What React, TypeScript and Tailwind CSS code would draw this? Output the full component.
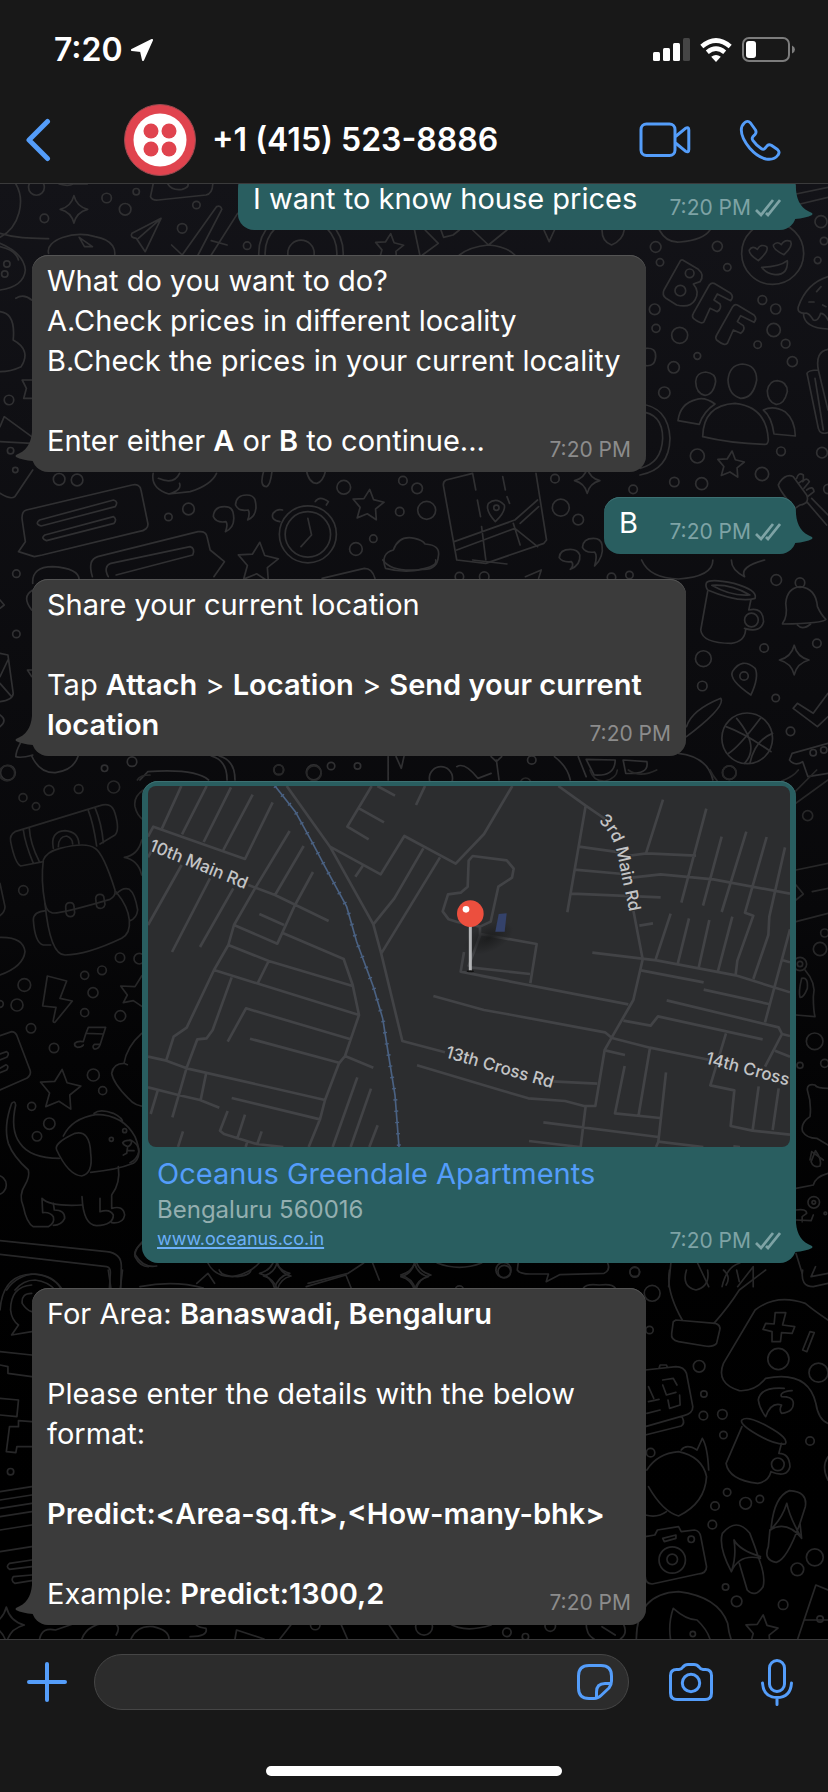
import React from "react";

type Ring = [number, number, number];

const BLUE = "#549dfa";

/* ---------- wallpaper ---------- */

interface PatchProps {
  x: number;
  y: number;
  sx: number;
  sy: number;
  rings: Ring[];
  stars?: Ring[];
  sparkles?: Ring[];
  paths: string[];
}

function starPath(cx: number, cy: number, r: number, k: number) {
  const pts: string[] = [];
  for (let i = 0; i < 10; i++) {
    const a = -Math.PI / 2 + 0.1 + (i * Math.PI) / 5;
    const q = i % 2 === 0 ? r : r * 0.5;
    pts.push(`${(cx + Math.cos(a) * q).toFixed(1)} ${(cy + Math.sin(a) * q * k).toFixed(1)}`);
  }
  return `M${pts.join("L")}Z`;
}

function sparklePath(cx: number, cy: number, r: number, k: number) {
  const s = r * k;
  const c = r * 0.2;
  const d = c * k;
  return `M${cx} ${cy - s}Q${cx + c} ${cy - d} ${cx + r} ${cy}Q${cx + c} ${cy + d} ${cx} ${cy + s}Q${cx - c} ${cy + d} ${cx - r} ${cy}Q${cx - c} ${cy - d} ${cx} ${cy - s}Z`;
}

function Patch({ x, y, sx, sy, rings, stars = [], sparkles = [], paths }: PatchProps) {
  const k = sx / sy;
  return (
    <g transform={`translate(${x} ${y}) scale(${sx} ${sy})`}>
      {rings.map(([cx, cy, r], i) => (
        <ellipse key={i} cx={cx} cy={cy} rx={r} ry={r * k} vectorEffect="non-scaling-stroke" />
      ))}
      {stars.map(([cx, cy, r], i) => (
        <path key={i} d={starPath(cx, cy, r, k)} vectorEffect="non-scaling-stroke" />
      ))}
      {sparkles.map(([cx, cy, r], i) => (
        <path key={i} d={sparklePath(cx, cy, r, k)} vectorEffect="non-scaling-stroke" />
      ))}
      {paths.map((d, i) => (
        <path key={i} d={d} vectorEffect="non-scaling-stroke" />
      ))}
    </g>
  );
}

const T = 1 / 3;
const W = 828 / 1568;

const PATCHES: PatchProps[] = [
  {
    x: 0, y: 0, sx: W, sy: T,
    rings: [[69, 562, 15], [258, 575, 6], [202, 594, 9], [237, 628, 11], [84, 655, 8], [345, 685, 9], [468, 737, 7], [372, 615, 7], [570, 760, 80], [570, 760, 68], [570, 760, 25]],
    stars: [[737, 745, 28]],
    sparkles: [[140, 628, 26]],
    paths: [
      "M30 552C48 600 38 680 0 712M0 700C30 715 60 715 92 716M92 760C85 720 140 690 180 710C215 720 222 750 215 780M150 712L175 740L160 740Z",
      "M290 552L285 590Q288 602 300 600L390 585Q402 582 403 552M318 552Q325 572 345 568Q358 562 356 552M112 552Q130 560 138 552L165 552",
      "M305 655L250 700Q245 712 258 715L275 755L305 655L262 715",
      "M410 620L345 765M420 628L375 765M410 620Q418 615 420 628M450 640L400 765M325 735L345 765M400 722L430 735",
      "M785 690L795 765M805 690L830 730L800 765M895 690L925 735L960 690M925 735Q890 740 870 765M925 735Q960 740 975 765M835 690L840 712L858 705L870 690",
      "M1030 690L1040 725L1050 690M1140 690Q1140 725 1158 735Q1180 720 1182 690",
      "M0 740Q30 750 35 780",
    ],
  },
  {
    x: 640, y: 180, sx: T, sy: T,
    rings: [[47, 201, 16], [60, 247, 11], [232, 199, 15], [262, 262, 11], [44, 388, 16], [48, 445, 12], [119, 466, 24], [367, 360, 13], [407, 387, 15], [401, 450, 20], [353, 494, 11], [437, 491, 13], [457, 545, 15], [172, 528, 10], [101, 562, 17], [73, 638, 17], [543, 125, 18], [552, 183, 11], [533, 241, 10], [172, 828, 21], [423, 814, 13], [546, 818, 16], [366, 882, 20], [185, 911, 18], [103, 906, 14], [565, 927, 14], [149, 280, 13], [121, 332, 16], [398, 220, 93]],
    stars: [[272, 855, 42]],
    paths: [
      "M468 42L564 22M468 75L564 52M58 150Q80 190 120 186Q190 180 210 150",
      "M128 240L175 268Q195 285 180 305L160 312Q180 335 165 360Q150 385 110 375L78 355Q65 345 72 330L118 248Q122 238 128 240Z",
      "M222 310L272 340Q282 350 272 362L232 342L222 360L240 372Q246 385 232 395L210 385L192 425Q185 435 160 415Q155 408 160 400L208 315Q214 307 222 310Z",
      "M292 375L342 405Q352 415 342 427L302 407L292 425L310 437Q316 450 302 460L280 450L262 490Q255 500 230 480Q225 473 230 465L278 380Q284 372 292 375Z",
      "M355 242Q325 222 328 210Q338 195 352 208Q362 190 380 200Q388 212 355 242Z",
      "M432 224Q398 208 400 195Q412 182 424 194Q434 176 452 184Q460 198 432 224Z",
      "M365 262Q420 260 442 242Q445 285 405 284Q380 282 365 262Z",
      "M564 290Q500 310 475 380Q470 400 495 400Q505 395 520 420Q535 425 542 400Q555 400 564 420M490 400Q492 445 564 447M543 320L530 335M507 366L522 366M548 375L558 380",
      "M197 576Q228 580 227 605Q220 645 195 646Q168 640 167 605Q168 578 197 576Z",
      "M307 552Q350 555 350 600Q340 655 302 655Q266 645 264 600Q268 555 307 552Z",
      "M412 602Q442 605 442 635Q432 675 408 673Q382 665 382 632Q388 602 412 602Z",
      "M225 672Q195 650 170 658Q120 670 114 722L178 733Q190 695 225 672Z",
      "M188 770Q190 675 285 670Q380 680 385 780Q384 795 372 793Q270 790 188 770Z",
      "M370 690Q400 675 435 695Q465 720 466 768L402 762Q395 710 370 690Z",
      "M0 672Q85 680 90 775Q88 870 0 885M0 695Q68 700 68 775Q65 850 0 865M18 505Q48 502 47 530Q45 560 18 557",
      "M420 905Q440 880 460 890L500 945Q510 970 480 975L465 985Q420 935 415 915ZM470 895Q475 875 490 885L490 900L478 908M488 905Q500 890 508 905L492 925M500 930Q520 915 522 935L505 948M500 965L560 1035M515 955L564 1005",
      "M501 580Q505 570 535 570M501 580L535 745Q540 765 564 758M525 595L550 750M535 570Q525 515 564 508M535 570L564 690",
    ],
  },
  {
    x: 0, y: 240, sx: W, sy: T,
    rings: [[13, 72, 6], [9, 102, 6], [17, 480, 9], [20, 632, 6], [29, 690, 5], [112, 718, 11], [146, 720, 11], [651, 742, 13], [790, 745, 10], [763, 722, 8], [319, 831, 7], [357, 807, 11], [757, 815, 8], [808, 811, 17], [674, 927, 12], [707, 896, 7], [1062, 803, 16], [1095, 839, 10], [1051, 716, 8], [1199, 748, 8], [583, 883, 54], [583, 883, 43], [940, 803, 5]],
    stars: [[697, 797, 31], [488, 970, 40]],
    sparkles: [[1112, 722, 24]],
    paths: [
      "M0 10Q45 40 48 90Q45 140 0 150M30 175Q45 160 60 180M0 215Q30 220 25 300Q60 330 40 380Q20 395 0 395M60 420L42 420L50 445L45 475L60 475M0 605L60 610M0 560L8 530L60 590M62 690L28 770Q20 780 0 760",
      "M290 700Q285 745 320 762L360 755Q400 735 410 700M300 715Q330 735 340 700M320 762Q345 750 340 730M500 690Q490 740 505 740Q512 735 515 695M580 690Q585 730 600 730Q612 725 617 690",
      "M50 810L250 735Q265 730 267 750L280 850Q282 870 262 875L80 945L65 950L35 935L48 905L42 840Q40 815 50 810Z",
      "M75 840L215 780Q225 785 218 800L78 858Q65 852 75 840ZM85 885L215 830Q222 838 216 850L88 902Q76 895 85 885Z",
      "M175 1010Q165 960 185 950L375 875Q390 872 392 890L398 930L425 965L405 1010M205 1010Q195 980 210 970L360 920Q370 925 365 945L220 1005",
      "M425 800Q405 800 404 830Q410 850 428 845Q432 855 427 875Q448 860 441 815Q438 800 425 800Z",
      "M467 765Q447 765 446 795Q452 815 470 810Q474 820 469 840Q490 825 483 780Q480 765 467 765Z",
      "M1080 928Q1060 928 1059 953Q1065 968 1082 965Q1088 975 1080 988Q1100 975 1098 945Q1094 928 1080 928ZM1124 895Q1104 895 1103 922Q1109 940 1126 936Q1132 946 1126 978Q1144 950 1140 915Q1138 895 1124 895Z",
      "M583 835L590 885L570 920M597 785Q605 765 622 785L618 795M530 845Q512 840 517 820Q525 805 535 810",
      "M730 985Q720 940 745 930Q755 885 785 895Q800 900 805 912Q835 915 830 950Q828 990 800 988Q765 1000 730 985Z",
      "M895 700L845 720Q838 725 840 740L865 960L920 970L1030 910L1035 900L1015 700M895 700L901 750M904 780L910 830M912 860L920 960M952 710L957 750M960 770L965 790M972 850L985 915M860 905L975 840L1018 780M865 930L975 865L1018 920M985 850L1020 800",
      "M938 845Q918 810 925 790Q940 770 955 795Q958 815 938 845Z",
    ],
  },
  {
    x: 0, y: 560, sx: W, sy: T,
    rings: [[31, 41, 7], [31, 222, 7], [15, 638, 14], [250, 605, 9], [198, 625, 6], [528, 629, 9], [594, 637, 14], [627, 618, 7], [677, 618, 6], [1007, 600, 8], [1470, 60, 10], [1547, 250, 8], [1447, 264, 8], [1332, 296, 15], [1330, 378, 9], [1469, 414, 7], [1497, 514, 8], [1381, 638, 13], [1158, 52, 8], [1192, 45, 7], [870, 50, 8], [917, 50, 9], [1423, 180, 13], [1515, 68, 9], [1409, 348, 8], [1415, 535, 48], [1540, 578, 6], [1560, 570, 6], [835, 655, 22]],
    sparkles: [[1504, 300, 28]],
    paths: [
      "M62 70Q60 20 100 20Q150 25 150 60M62 90Q40 110 60 150M0 120L8 135L0 145M0 280L15 285L25 400Q25 420 0 425M0 350L15 300M0 370L22 410M60 330L52 330L60 350M0 465Q15 480 0 500M60 500Q30 560 30 590Q40 595 62 585",
      "M60 588Q75 640 105 638Q140 630 148 588M265 660L280 635Q370 625 395 660M400 588Q430 600 430 660M415 588Q445 600 445 660M735 660L735 590M750 590L760 625L765 590M940 600L945 660M930 590L940 605L950 590M865 620Q880 605 905 655L930 640M1050 590Q1075 620 1080 660",
      "M1110 598L1125 645Q1165 650 1165 600ZM1180 600L1185 640Q1230 645 1225 605ZM1095 590L1110 650M1285 580Q1340 590 1350 660",
      "M1338 68Q1345 55 1390 70Q1435 90 1430 115Q1400 130 1340 90Q1335 78 1338 68ZM1348 76Q1385 72 1420 105Q1385 110 1348 76Z",
      "M1340 95L1327 210Q1330 250 1385 250Q1410 245 1412 210M1422 120L1418 150Q1445 140 1446 185Q1440 220 1410 205",
      "M1482 190Q1492 170 1488 130Q1490 85 1515 80Q1545 85 1548 140Q1555 165 1564 178Q1560 190 1482 192ZM1510 195Q1520 212 1535 192",
      "M1422 405Q1380 360 1387 335Q1405 290 1430 325Q1438 350 1422 405Z",
      "M1568 400L1540 460L1510 430L1502 445L1548 500L1568 470M1365 415Q1310 450 1300 500M1365 415Q1375 440 1300 530",
      "M1375 500Q1410 520 1460 575M1395 475Q1440 560 1410 610M1440 475Q1400 560 1380 580M1463 520Q1430 540 1420 610",
      "M1568 550L1500 580L1495 600Q1505 620 1520 605L1530 650L1568 640",
      "M725 0Q740 35 790 30Q830 20 825 0M895 0L960 12M610 55L690 25Q705 25 710 55M995 50L1025 30L1020 55M1215 0Q1230 55 1285 57Q1350 50 1350 0M1385 0Q1385 30 1410 50Q1400 20 1448 0",
    ],
  },
  {
    x: 0, y: 770, sx: T, sy: T,
    rings: [[21, 10, 23], [69, 83, 12], [108, 109, 11], [147, 61, 15], [236, 57, 13], [341, 51, 18], [70, 361, 14], [360, 563, 14], [418, 566, 16], [306, 601, 13], [254, 616, 12], [279, 668, 15], [254, 728, 12], [361, 738, 16], [73, 645, 19], [51, 705, 18], [93, 775, 14], [162, 834, 14], [280, 915, 18], [308, 962, 12], [95, 1009, 12], [148, 1061, 17], [111, 1099, 14], [0, 702, 10], [-10, 1245, 29], [334, 1108, 6], [374, 1082, 6], [836, 0, 15], [942, 10, 22]],
    stars: [[180, 962, 64]],
    paths: [
      "M45 185L300 107Q335 95 345 130Q360 180 345 195L300 222M45 185Q28 195 32 215Q45 280 62 288L130 275M70 180Q75 220 100 280M88 175Q90 220 118 275M265 122Q280 160 290 228M285 113Q305 160 310 218",
      "M160 235Q150 185 195 182Q235 185 237 222M175 230Q175 200 200 198Q218 205 218 222",
      "M130 270Q140 245 180 235Q260 215 285 235Q310 250 345 360Q348 378 330 388Q170 435 155 428Q140 425 135 400Q122 330 130 270Z",
      "M135 400Q150 555 195 555Q260 555 365 505Q392 490 388 450Q385 410 348 365M138 422Q100 425 100 450Q105 520 130 525L152 525M348 372Q370 350 388 358Q405 370 413 420Q410 445 390 452",
      "M197 410Q198 398 210 398Q222 398 222 410L224 428Q222 440 211 440Q200 440 198 428ZM287 385Q288 373 300 373Q312 373 312 385L315 403Q312 415 301 415Q290 415 289 403Z",
      "M0 502Q70 500 75 545Q70 590 0 615M0 340L15 410Q15 425 0 437",
      "M142 618L200 633L180 685L217 693L165 757Q158 758 160 750L168 712L128 708Z",
      "M250 825Q245 832 232 832Q222 828 224 820Q232 812 250 815Q255 795 265 772L317 772L300 825Q295 838 283 837Q275 830 283 823L298 823M260 790L310 792",
      "M0 797L35 785Q45 785 50 795L90 900Q95 915 80 925L0 960M0 852L20 845Q30 850 20 862L0 870M0 895L18 884Q28 888 20 900L0 908",
      "M35 1000Q10 1070 25 1120Q40 1160 85 1200Q90 1220 75 1245Q55 1275 70 1310Q80 1360 100 1370L145 1370Q165 1360 160 1340Q150 1325 128 1328L126 1285Q150 1310 245 1305M35 1000Q45 990 47 1005Q30 1080 60 1120Q90 1165 178 1165",
      "M190 1098Q215 1045 290 1033Q370 1035 405 1100Q430 1160 400 1180Q350 1200 272 1207M170 1140Q160 1120 225 1090Q270 1080 272 1150Q280 1210 245 1218Q205 1215 170 1140ZM282 1030Q300 1015 340 1030Q370 1045 368 1058",
      "M355 1190Q362 1240 335 1275L335 1315Q370 1305 374 1335Q370 1362 335 1358M246 1280Q250 1365 290 1367Q340 1365 340 1335Q330 1315 300 1325L300 1285M160 1300L163 1320Q195 1320 194 1345Q185 1365 160 1366",
      "M368 1118Q375 1108 395 1112Q395 1125 383 1130Q370 1125 368 1118ZM383 1130L380 1150L370 1155M383 1142L402 1142",
      "M0 1412L320 1445Q365 1450 364 1490L362 1560M0 1453L320 1490Q332 1492 331 1510L328 1560M20 1560Q50 1515 105 1512Q160 1515 188 1560M45 1560Q70 1530 105 1530Q145 1535 165 1560",
      "M425 790Q380 830 372 880Q340 880 335 910Q340 940 385 985Q405 1010 440 1010M372 880L382 884M425 210Q415 255 373 262Q415 270 425 315M435 610L425 618L405 650L362 648L382 675L370 698L400 692L430 712M425 1420Q400 1440 405 1460Q420 1490 445 1490M430 60Q400 80 405 110Q410 135 430 150M412 30Q420 15 450 15",
    ],
  },
  {
    x: 480, y: 770, sx: T, sy: T,
    rings: [[983, 137, 15], [1034, 489, 12], [1020, 537, 20], [960, 582, 8], [960, 582, 20], [1004, 814, 25], [960, 886, 9], [1034, 880, 12], [748, 8, 20], [137, 40, 16]],
    paths: [
      "M940 105L1044 30M940 70L1010 0M948 300L1044 280M997 365L1044 355M948 455L1044 430M948 345L970 372L948 390",
      "M975 600Q1010 640 1000 680Q1000 720 1005 740L948 735M965 625Q985 620 982 655Q970 685 960 682Q955 665 965 625Z",
      "M1044 955Q1010 955 1005 945Q980 940 982 960Q995 1000 990 1040Q960 1060 968 1085Q980 1105 1010 1105L1044 1125M995 1145L1030 1170M995 1145L990 1170",
      "M330 0Q340 35 375 33Q410 25 412 0M445 0Q480 25 530 0M690 0Q700 20 712 33M905 33Q940 20 955 0",
    ],
  },
  {
    x: 130, y: 1140, sx: 698 / 1568, sy: T,
    rings: [[1536, 187, 13], [1536, 187, 4], [839, 390, 17], [1134, 397, 11], [1562, 220, 3]],
    sparkles: [[325, 400, 34], [642, 405, 34]],
    paths: [
      "M1540 32Q1555 60 1550 78Q1535 85 1530 65ZM1568 100Q1540 110 1535 135L1496 145M1496 210Q1520 205 1520 220L1510 230L1510 245M1496 240L1530 242L1535 225",
      "M175 369Q190 410 230 410Q270 400 290 369M400 430L490 400L525 369M545 369L560 420M690 369Q740 395 790 369M872 369L870 390Q875 402 900 402L940 402L935 425L965 404L1065 400Q1080 390 1073 369M1215 369L1210 440M1275 369L1300 440M1330 440Q1340 380 1370 369M1365 440L1400 380L1400 440M1540 380L1530 410L1568 400",
      "M28 305Q10 330 12 345Q30 385 60 378M0 0Q20 10 20 35Q15 60 0 68M1496 340L1510 400M150 430L175 400L190 430",
    ],
  },
  {
    x: 0, y: 1270, sx: W, sy: T,
    rings: [[20, 605, 6], [955, 5, 12], [1202, 5, 9], [870, 60, 8], [1235, 70, 15], [1230, 180, 7], [1474, 267, 20], [1550, 308, 18], [1324, 289, 11], [1333, 372, 6], [1332, 437, 8], [1368, 433, 9], [1370, 495, 7], [1534, 513, 8], [1232, 548, 8], [1377, 667, 7], [1354, 708, 8], [1412, 700, 11], [1439, 687, 7], [1349, 764, 8], [1543, 862, 16], [1510, 898, 12], [1374, 951, 6], [1395, 994, 10], [1483, 1004, 9], [1473, 583, 12], [1273, 870, 25], [1273, 868, 10], [1309, 808, 6], [1553, 1047, 6]],
    stars: [[1442, 1085, 32]],
    sparkles: [[525, 18, 26], [785, 20, 26]],
    paths: [
      "M0 120Q5 15 60 12Q100 15 115 55M60 45Q20 50 20 120Q22 150 35 165L22 195L60 185M60 70Q40 70 42 100Q50 120 60 125M0 245L60 255M0 285L15 290L15 310L60 320M0 385L35 390L32 440L0 435M60 455L35 452L35 470L18 470L12 545L30 548L32 530L60 530",
      "M0 665L60 650M0 690L60 675M0 715L60 700M0 740L60 725M0 780L60 765M0 845L60 830M60 870L18 880Q10 890 18 898L60 890M60 915L25 920Q20 932 28 940L60 932",
      "M205 0L210 54M232 0L228 54M415 0Q420 20 450 20Q475 15 475 0M265 50Q330 30 385 54M580 50L655 15L665 54M1105 54Q1110 40 1135 45Q1160 40 1165 54",
      "M1268 0Q1260 60 1292 150M1352 160Q1380 110 1400 60L1450 0M1300 0Q1290 50 1318 60Q1345 50 1340 0M1370 0Q1385 20 1375 45M1395 0L1400 35",
      "M1280 150L1355 160Q1365 165 1363 180L1357 220Q1350 232 1335 228L1285 215Q1270 210 1272 190L1275 155Z",
      "M1568 150Q1540 120 1525 100Q1470 70 1430 120L1370 280Q1355 340 1400 362Q1430 365 1450 325Q1530 300 1545 400Q1550 450 1568 460",
      "M1468 128L1488 128L1482 165L1505 170L1500 190L1480 188L1478 215L1462 215L1462 185L1445 178L1450 160L1466 162ZM1534 185L1542 188L1528 245L1520 240Z",
      "M1222 300L1280 290Q1295 290 1300 310L1312 410Q1312 430 1295 437L1222 470M1248 295L1250 285L1262 285L1264 293M1222 495L1290 468Q1298 460 1292 442M1255 330L1275 325L1282 345M1228 350L1238 385M1255 345L1262 375L1280 367M1228 395L1248 388M1265 390L1268 415L1288 405L1287 375M1225 430L1250 420",
      "M1485 355Q1440 350 1436 390Q1438 415 1450 440Q1460 395 1480 405Q1475 420 1480 430Q1505 425 1502 395Q1500 380 1480 380Q1475 365 1500 362M1520 0Q1515 50 1540 50L1568 40",
      "M1405 450Q1415 435 1455 470Q1495 505 1487 522Q1465 525 1425 485Q1400 460 1405 450ZM1405 470L1375 580Q1380 630 1435 640Q1455 635 1460 605M1480 520L1475 550Q1495 550 1496 590Q1490 625 1460 605",
      "M1225 600Q1245 550 1285 545Q1330 560 1338 620Q1335 700 1285 738Q1255 725 1228 650M1290 540Q1300 520 1320 540L1330 505Q1340 530 1342 600M1222 735Q1245 745 1262 725",
      "M1222 800L1240 795L1245 780L1285 770L1290 785L1315 780Q1325 782 1327 800L1338 890Q1338 910 1322 912L1235 942Q1222 940 1222 920M1255 805L1280 795L1280 805L1258 815Z",
      "M1385 905Q1360 830 1368 790Q1395 740 1420 790Q1430 830 1438 870Q1450 920 1445 950Q1430 985 1415 960L1400 880M1390 810Q1400 840 1440 860M1390 810Q1395 860 1385 905M1440 865Q1400 850 1385 905",
      "M1460 780Q1465 680 1495 662Q1530 665 1525 710L1515 760L1518 805M1455 830Q1445 870 1470 877Q1490 870 1515 760M1490 700Q1495 740 1518 805M1490 700Q1480 750 1458 780L1455 830M1458 780Q1490 750 1518 805",
      "M1205 1110Q1205 970 1285 965Q1360 980 1378 1060Q1380 1090 1385 1110M1270 1110Q1265 1060 1275 1015Q1300 1050 1320 1050Q1340 1080 1345 1110M1510 1110L1545 945L1568 960M1525 1050L1568 1050M1568 560Q1555 590 1568 630",
    ],
  },
  {
    x: 0, y: 1620, sx: W, sy: T,
    rings: [[597, 15, 9], [960, 37, 8], [995, 50, 6], [1042, 18, 10], [803, 20, 16], [1312, 42, 5]],
    sparkles: [[12, 15, 34]],
    paths: [
      "M75 57Q80 20 105 30L160 0M155 57Q165 10 215 5Q230 20 220 45M248 57Q260 15 290 20Q320 30 320 57M370 0Q365 20 390 25Q395 50 360 50M445 57L448 30L500 57M530 57L558 0M645 10L658 57M735 10L755 57M850 10Q880 40 930 15M1110 10Q1110 45 1125 57M1140 20L1165 45M1180 10Q1190 40 1175 57",
    ],
  },
];

function Wallpaper() {
  return (
    <svg
      className="absolute inset-0 h-full w-full"
      viewBox="0 184 828 1455"
      preserveAspectRatio="xMidYMin slice"
      fill="none"
      strokeWidth={1.7}
      strokeLinejoin="round"
      strokeLinecap="round"
      aria-hidden="true"
    >
      {PATCHES.map((p, i) => (
        <g key={i} stroke={i < 4 ? "#303032" : "#272728"}>
          <Patch {...p} />
        </g>
      ))}
    </svg>
  );
}

/* ---------- map ---------- */

const ROADS_WEST =
  "M24 200L40 170L315 267L398 97M66 175L124 48M126 193L200 48M191 216L273 52M250 240L338 74M24 262L36 240M24 465L125 285M96 546L210 325M180 531L280 355" +
  "M325 345L405 375L566 453M449 183L345 355L282 465L265 525L222 600L140 773L101 800L79 870M405 375L491 228M519 306L465 405L412 521L282 465M358 432L432 465M430 490L611 567L638 645L657 735L632 808L615 858L597 880L555 990L540 1048L506 1131" +
  "M265 525L386 573L638 648M386 573L354 638M222 600L657 735M275 622L218 780L200 805L172 808L140 893L97 1042M263 815L318 715L632 808M330 806L597 878M615 858L700 893" +
  "M24 860L79 872L140 895L555 990M24 952L115 975L180 990L238 1013M198 912L182 990M53 962L32 1032M275 984L540 1048M263 1023L240 1082L252 1092L350 1122L430 1131M315 1034L293 1102M365 1084L352 1122M129 1084L114 1131M322 1115L317 1131M652 922L578 1131M693 956L632 1131M713 1066L688 1131" +
  "M440 48L570 230L700 463L724 552L787 813L915 847M570 230L722 313L793 198L947 281L1032 192L1117 48M668 288L646 320M700 463L763 385L850 235M724 550L900 262M695 48L622 170L686 208M657 115L732 157M712 48L765 77M855 48L828 105" +
  "M972 546L962 605L1080 628M985 590L1020 497L1020 470L952 456L926 448L908 424L924 373L962 368L983 350L986 272L998 258L1100 271L1121 296L1116 323L1075 350L1052 455L1020 470M1020 492L1190 522L1171 640M990 592L1170 612M1020 617L1465 703M880 678L1032 720L1100 732L1395 787L1415 803M831 886L1080 960L1165 985L1275 993L1332 1008L1366 1008L1394 840L1415 803L1480 690L1508 568L1478 410";

const ROADS_EAST =
  "M235 48L317 107L380 150M317 107L262 427M297 230L420 247M283 299L430 312M275 371L542 382M440 258L500 250L648 257M498 250L549 89M455 323L542 313L700 328L930 371M679 116L604 398M725 200L669 407M799 185L725 426M860 201L795 428L820 437L772 572L767 614M915 232L868 440L865 495L820 627M930 478L855 757" +
  "M478 467L519 460M337 548L530 571L767 616L930 667M572 431L526 571M627 445L592 586M688 450L656 593M757 440L713 607M483 601L671 637M671 659L866 702M560 691L896 772L906 792L855 890M430 752L512 767L534 739L848 808M906 792L930 798M885 842L930 860M906 570L930 577" +
  "M393 803L510 833L690 870M375 841L435 855M434 888L405 1030L540 1044M510 833L475 1040M558 907L535 1115L528 1131M190 1057L535 1101M147 1113L300 1131M317 1008L302 1131M535 1115L670 1131M215 934L352 941M738 790L691 946L763 961L752 1068L817 1082L930 1094M836 949L818 1080M896 955L878 1080M760 1129L780 1131";

const RAIL =
  "M405 48L466 125L515 214L555 290L620 410L650 515L700 650L728 745L748 870L765 975L777 1131";

function LocationMap() {
  return (
    <svg
      viewBox="24 48 1926 1083"
      className="block h-auto w-full rounded-lg bg-[#2c2d2f]"
      role="img"
      aria-label="Map with a pin near 13th Cross Rd"
      fontFamily="Inter, 'Liberation Sans', sans-serif"
      fontSize={51}
      fontWeight={500}
    >
      <defs>
        <path id="third-main" d="M1374 156Q1420 184 1437 280L1488 520" />
        <radialGradient id="shade">
          <stop offset="0" stopColor="#1c1d1e" />
          <stop offset="1" stopColor="#1c1d1e" stopOpacity="0" />
        </radialGradient>
      </defs>
      <g fill="none" stroke="#424346" strokeWidth={8} strokeLinejoin="round">
        <path d={ROADS_WEST} />
        <path d={ROADS_EAST} transform="translate(1020 0)" />
      </g>
      <g fill="none" stroke="#4a6182">
        <path d={RAIL} strokeWidth={5} />
        <path d={RAIL} strokeWidth={12} strokeDasharray="4 30" />
      </g>
      <ellipse cx={1045} cy={505} rx={80} ry={40} fill="url(#shade)" transform="rotate(-25 1045 505)" />
      <path d="M1076 432L1100 430L1094 485L1066 485Z" fill="#34426b" />
      <g fill="#c3c4c6" stroke="#2c2d2f" strokeWidth={6} paintOrder="stroke">
        <text transform="translate(25 240) rotate(22)">10th Main Rd</text>
        <text transform="translate(914 862) rotate(16)">13th Cross Rd</text>
        <text transform="translate(1694 880) rotate(15)">14th Cross</text>
        <text>
          <textPath href="#third-main">3rd Main Rd</textPath>
        </text>
      </g>
      <path d="M991 465V603" stroke="#b4b5b7" strokeWidth={9} />
      <ellipse cx={991} cy={604} rx={11} ry={3} fill="#111" />
      <circle cx={991} cy={431} r={40} fill="#ec4f3e" />
      <circle cx={978} cy={418} r={10} fill="#fff" />
    </svg>
  );
}

/* ---------- messages ---------- */

function Tail({ out }: { out?: boolean }) {
  return (
    <svg
      viewBox="0 0 18 30"
      className={
        out
          ? "absolute -right-[17px] bottom-[10px] h-[30px] w-[18px]"
          : "absolute -left-[17px] bottom-[10px] h-[30px] w-[18px] -scale-x-100"
      }
      aria-hidden="true"
    >
      <path d="M0 0H1C2 12 7 19 17 23Q18 24 17 25Q11 28 0 29Z" fill={out ? "#295e60" : "#3b3b3b"} />
    </svg>
  );
}

function Ticks() {
  return (
    <svg viewBox="0 0 26 18" className="h-[18px] w-[26px]" fill="none" stroke="#7ea3a5" strokeWidth={2.7} aria-label="Delivered">
      <path d="M1 11L6 16L18 1M11 14L13 16L25 1" />
    </svg>
  );
}

function Stamp({ out }: { out?: boolean }) {
  return (
    <div className="col-start-1 row-start-1 flex items-center gap-1 self-end justify-self-end">
      <time
        dateTime="19:20"
        className={out ? "text-[21px] leading-[22px] text-[#7ea3a5]" : "text-[21px] leading-[22px] text-[#8c8c8c]"}
      >
        7:20 PM
      </time>
      {out && <Ticks />}
    </div>
  );
}

function Bubble({ out, width, children }: { out?: boolean; width: string; children: React.ReactNode }) {
  return (
    <article
      className={`relative grid max-w-full shrink-0 rounded-2xl px-[15px] pt-[6px] pb-[11px] text-[29px] leading-10 ${
        out ? "self-end bg-[#295e60] shadow-[inset_0_1px_0_#3d7072]" : "self-start bg-[#3b3b3b] shadow-[inset_0_1px_0_#545454]"
      } ${width}`}
    >
      <div className="col-start-1 row-start-1">{children}</div>
      <Stamp out={out} />
      <Tail out={out} />
    </article>
  );
}

function B({ children }: { children: React.ReactNode }) {
  return <strong className="font-semibold">{children}</strong>;
}

/* ---------- page ---------- */

function StatusBar() {
  return (
    <div className="flex h-24 items-center justify-between pt-1 pr-[33px] pl-[54px]">
      <div className="flex items-center gap-2">
        <span className="text-[32px] leading-9 font-semibold">7:20</span>
        <svg viewBox="0 0 22 22" className="h-[22px] w-[22px]" fill="#fff" stroke="#fff" strokeWidth={2} strokeLinejoin="round" aria-label="Location in use">
          <path d="M21 1L1 11L10 12L12 21Z" />
        </svg>
      </div>
      <div className="flex items-center gap-[10px]">
        <svg viewBox="0 0 37 24" className="h-6 w-[37px]" fill="#fff" aria-label="Signal">
          <rect x="0" y="14" width="7" height="9" rx="1.5" />
          <rect x="10" y="10" width="7" height="13" rx="1.5" />
          <rect x="20" y="5" width="7" height="18" rx="1.5" />
          <rect x="30" y="0" width="7" height="23" rx="1.5" fill="#454545" />
        </svg>
        <svg viewBox="0 0 32 24" className="h-6 w-8" fill="none" stroke="#fff" strokeWidth={4.6} aria-label="Wi-Fi">
          <path d="M1.8 8.6Q16-3.6 30.2 8.6M7.3 14.2Q16 7 24.7 14.2" />
          <path d="M16 24L11.2 18.8Q16 15 20.8 18.8Z" fill="#fff" stroke="none" />
        </svg>
        <svg viewBox="0 0 53 26" className="h-[26px] w-[53px]" aria-label="Battery">
          <rect x="1" y="1" width="46" height="23" rx="6" fill="none" stroke="#7c7c7c" strokeWidth="2" />
          <rect x="4" y="4" width="10" height="17" rx="3" fill="#fff" />
          <path d="M50 8.5Q53 10 53 12.500T50 16.500Z" fill="#7c7c7c" />
        </svg>
      </div>
    </div>
  );
}

function Header() {
  return (
    <header className="relative shrink-0 border-b border-[#3a3a3b] bg-[#181818]">
      <StatusBar />
      <div className="flex h-[87px] items-center pr-[47px] pl-[25px]">
        <button type="button" aria-label="Back" className="w-[99px]">
          <svg viewBox="0 0 26 44" className="h-11 w-[26px]" fill="none" stroke={BLUE} strokeWidth={5} strokeLinecap="round" strokeLinejoin="round">
            <path d="M22.500 3.500L4 22L22.500 40.500" />
          </svg>
        </button>
        <svg viewBox="0 0 72 72" className="h-[72px] w-[72px]" aria-label="Contact photo">
          <circle cx="36" cy="36" r="35.500" fill="#e0434e" stroke="#9a4a50" />
          <circle cx="36" cy="36" r="26.500" fill="#fff" />
          <g fill="#e0434e">
            <circle cx="27" cy="27" r="7.500" />
            <circle cx="45" cy="27" r="7.500" />
            <circle cx="27" cy="45" r="7.500" />
            <circle cx="45" cy="45" r="7.500" />
          </g>
        </svg>
        <h1 className="ml-4 flex-1 text-[32px] leading-10 font-semibold whitespace-nowrap">+1 (415) 523-8886</h1>
        <button type="button" aria-label="Video call">
          <svg viewBox="0 0 52 36" className="h-9 w-[52px]" fill="none" stroke={BLUE} strokeWidth={3} strokeLinejoin="round">
            <rect x="2" y="2" width="34" height="31.500" rx="5.500" />
            <path d="M36.500 14.500L46.500 6.300Q49.800 4.500 49.800 8V27.500Q49.800 31 46.500 29.200L36.500 21" />
          </svg>
        </button>
        <button type="button" aria-label="Voice call" className="ml-[48px]">
          <svg viewBox="0 0 42 42" className="h-[42px] w-[42px]" fill="none" stroke={BLUE} strokeWidth={2.900} strokeLinejoin="round">
            <path d="M5.500 3.800Q8.500 0.800 11.500 4L16.500 11Q17.800 13.500 16 15.500L13.800 17.800Q12.600 19.400 13.800 21.300Q17.500 26.500 22.500 29.800Q24.300 31 25.800 29.500L28.300 26.600Q30 25 32.300 26.200L38.500 30.500Q41.300 33 39 36Q35 41.500 27 40Q18.500 38 10.800 29.200Q2.300 19 2.300 11Q2.300 6.800 5.500 3.800Z" />
          </svg>
        </button>
      </div>
    </header>
  );
}

function Composer() {
  return (
    <footer className="relative shrink-0 border-t border-[#3a3a3b] bg-[#181818] pt-[14px]">
      <form className="flex h-14 items-center pr-[34px] pl-[26px]" onSubmit={(e) => e.preventDefault()}>
        <button type="button" aria-label="Attach">
          <svg viewBox="0 0 42 42" className="h-[42px] w-[42px]" fill="none" stroke={BLUE} strokeWidth={4} strokeLinecap="round">
            <path d="M21 3V39M3 21H39" />
          </svg>
        </button>
        <div className="ml-[26px] flex h-14 min-w-0 flex-1 items-center rounded-full border border-[#464646] bg-[#2c2c2c] pr-[14px] pl-6">
          <input type="text" aria-label="Message" className="min-w-0 flex-1 bg-transparent text-[29px] outline-none" />
          <button type="button" aria-label="Stickers">
            <svg viewBox="0 0 38 38" className="h-[38px] w-[38px]" fill="none" stroke={BLUE} strokeWidth={3} strokeLinejoin="round">
              <path d="M13 2.500H25Q35.500 2.500 35.500 13V18Q35.500 22 33 25L25 32.500Q22 35.500 18 35.500H13Q2.500 35.500 2.500 25V13Q2.500 2.500 13 2.500Z" />
              <path d="M20.500 35V29Q20.500 20.500 29 20.500H35" />
            </svg>
          </button>
        </div>
        <button type="button" aria-label="Camera" className="ml-[39px]">
          <svg viewBox="0 0 46 40" className="h-10 w-[46px]" fill="none" stroke={BLUE} strokeWidth={3} strokeLinejoin="round">
            <path d="M2.500 13.500Q2.500 7.500 8.500 7.500H11Q13.500 7.300 15 5Q16.800 2.500 20 2.500H26Q29.200 2.500 31 5Q32.500 7.300 35 7.500H37.500Q43.500 7.500 43.500 13.500V31Q43.500 37.500 37 37.500H9Q2.500 37.500 2.500 31Z" />
            <circle cx="23" cy="21" r="8.700" />
          </svg>
        </button>
        <button type="button" aria-label="Record voice message" className="ml-[46px]">
          <svg viewBox="0 0 34 48" className="h-12 w-[34px]" fill="none" stroke={BLUE} strokeWidth={3} strokeLinecap="round">
            <rect x="9.500" y="2.500" width="15" height="31" rx="7.500" />
            <path d="M2.500 25Q3.500 39.500 17 39.500T31.500 25M17 40V46.500" />
          </svg>
        </button>
      </form>
      <div className="mx-auto mt-[56px] mb-4 h-[10px] w-[296px] rounded-full bg-white" />
    </footer>
  );
}

export default function App() {
  return (
    <div className="flex h-screen flex-col overflow-hidden bg-[#181818] font-[Inter,'Liberation_Sans',sans-serif] text-white">
      <Header />
      <main className="relative flex min-h-0 flex-1 flex-col justify-end gap-[25px] overflow-hidden bg-linear-to-b from-[#131318] via-[#08080a] via-50% to-black pr-8 pb-[14px] pl-8">
        <Wallpaper />
        <Bubble out width="w-[558px]">
          <p>I want to know house prices</p>
        </Bubble>
        <Bubble width="w-[614px]">
          <p>What do you want to do?</p>
          <p>A.Check prices in different locality</p>
          <p>B.Check the prices in your current locality</p>
          <p className="mt-10">
            Enter either <B>A</B> or <B>B</B> to continue...
          </p>
        </Bubble>
        <Bubble out width="w-[192px]">
          <p>B</p>
        </Bubble>
        <Bubble width="w-[654px]">
          <p>Share your current location</p>
          <p className="mt-10">
            Tap <B>Attach</B> &gt; <B>Location</B> &gt; <B>Send your current location</B>
          </p>
        </Bubble>
        <article className="relative w-[654px] max-w-full shrink-0 self-end rounded-2xl bg-[#295e60] px-[6px] pt-[5px] shadow-[inset_0_1px_0_#3d7072]">
          <LocationMap />
          <div className="grid px-[9px] pt-[7px] pb-[11px]">
            <div className="col-start-1 row-start-1 flex flex-col items-start">
              <a href="#place" className="text-[29px] leading-10 text-[#549dfa]">
                Oceanus Greendale Apartments
              </a>
              <p className="text-2xl leading-8 text-[#94afb0]">Bengaluru 560016</p>
              <a href="#site" className="text-lg leading-[26px] text-[#6cb0f8] underline decoration-2 underline-offset-2">
                www.oceanus.co.in
              </a>
            </div>
            <Stamp out />
          </div>
          <Tail out />
        </article>
        <Bubble width="w-[614px]">
          <p>
            For Area: <B>Banaswadi, Bengaluru</B>
          </p>
          <p className="mt-10">Please enter the details with the below format:</p>
          <p className="mt-10">
            <B>Predict:&lt;Area-sq.ft&gt;,&lt;How-many-bhk&gt;</B>
          </p>
          <p className="mt-10">
            Example: <B>Predict:1300,2</B>
          </p>
        </Bubble>
      </main>
      <Composer />
    </div>
  );
}
